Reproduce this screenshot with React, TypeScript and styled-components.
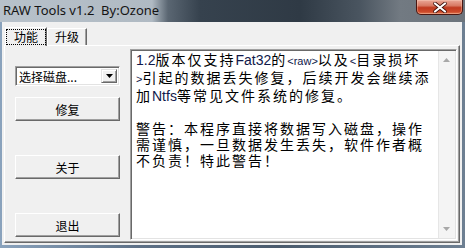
import React from 'react'
import styled, { createGlobalStyle } from 'styled-components'

const GlobalStyle = createGlobalStyle`
    html, body {
        margin: 0;
        padding: 0;
        width: 465px;
        height: 248px;
        overflow: hidden;
    }
`

const cjk = `"Noto Sans CJK SC", sans-serif`

const App: React.FC = () => {
    return (
        <Window>
            <GlobalStyle />
            <TitleBar>
                <Title>RAW Tools v1.2&nbsp;&nbsp;By:Ozone</Title>
                <CloseButton>
                    <svg width="14" height="11" viewBox="0 0 14 11">
                        <path d="M2 1.5 L12 9.5 M12 1.5 L2 9.5" stroke="#3a0d08" strokeWidth="3.6" strokeLinecap="round" />
                        <path d="M2 1.5 L12 9.5 M12 1.5 L2 9.5" stroke="#ffffff" strokeWidth="2.2" strokeLinecap="round" />
                    </svg>
                </CloseButton>
            </TitleBar>
            <Client>
                <TabStrip>
                    <Tab $active>
                        <Focus>功能</Focus>
                    </Tab>
                    <Tab>升级</Tab>
                </TabStrip>
                <Panel>
                    <LeftColumn>
                        <Combo>
                            <ComboText>选择磁盘...</ComboText>
                            <ComboArrow>
                                <svg width="7" height="4" viewBox="0 0 7 4">
                                    <path d="M0 0 H7 L3.5 4 Z" fill="#000" />
                                </svg>
                            </ComboArrow>
                        </Combo>
                        <ButtonStack>
                            <Button>修复</Button>
                            <Button>关于</Button>
                            <Button>退出</Button>
                        </ButtonStack>
                    </LeftColumn>
                    <TextBox>
                        <TextContent>
                            <Latin>1.2</Latin>版本仅支持<Latin>Fat32</Latin>的<Small>&lt;raw&gt;</Small>以及<Small>&lt;</Small>目录损坏<br />
                            <Small>&gt;</Small>引起的数据丢失修复，后续开发会继续添<br />
                            加<Latin>Ntfs</Latin>等常见文件系统的修复。<br />
                            <br />
                            警告：本程序直接将数据写入磁盘，操作<br />
                            需谨慎，一旦数据发生丢失，软件作者概<br />
                            不负责！特此警告！
                        </TextContent>
                        <ScrollBar>
                            <svg width="7" height="4" viewBox="0 0 7 4">
                                <path d="M3.5 0 L7 4 H0 Z" fill="#a8a8a8" />
                            </svg>
                            <svg width="7" height="4" viewBox="0 0 7 4">
                                <path d="M0 0 H7 L3.5 4 Z" fill="#a8a8a8" />
                            </svg>
                        </ScrollBar>
                    </TextBox>
                </Panel>
            </Client>
        </Window>
    )
}

const Window = styled.div`
    width: 465px;
    height: 248px;
    display: flex;
    flex-direction: column;
    background: linear-gradient(90deg, #8aa3bd 0, #5d7086 30%, #4a5b6d 60%, #6d7f92 100%);
    box-sizing: border-box;
`

const TitleBar = styled.div`
    height: 22px;
    display: flex;
    justify-content: space-between;
    align-items: flex-start;
    background: linear-gradient(90deg, #b7c1ca 0, #b0bac3 152px, #5a6672 168px, #36424e 200px, #2f3a45 300px, #4a5560 360px, #727a82 400px, #6c747c 465px);
`

const Title = styled.div`
    padding: 2px 0 0 3px;
    font-family: "Noto Sans", sans-serif;
    font-size: 13px;
    line-height: 17px;
    color: #141414;
    white-space: nowrap;
`

const CloseButton = styled.div`
    width: 47px;
    height: 15px;
    margin-right: 2px;
    box-sizing: border-box;
    display: flex;
    align-items: center;
    justify-content: center;
    border: 1px solid #4a1610;
    border-top: none;
    border-radius: 0 0 5px 5px;
    background: linear-gradient(180deg, #eaa898 0, #d87a64 40%, #c03a20 55%, #cc4a2a 85%, #e4805a 100%);
    box-shadow: inset 0 0 0 1px rgba(255, 220, 200, 0.35);
`

const Client = styled.div`
    flex: 1;
    margin: 0 3px 3px 2px;
    background: #f0f0f0;
    display: flex;
    flex-direction: column;
    padding-top: 5px;
    font-family: ${cjk};
    color: #000;
`

const TabStrip = styled.div`
    display: flex;
    align-items: flex-end;
    height: 18px;
    padding-left: 3px;
    position: relative;
    z-index: 1;
`

const Tab = styled.div<{ $active?: boolean }>`
    height: ${p => (p.$active ? '19px' : '17px')};
    margin-bottom: ${p => (p.$active ? '-1px' : '0')};
    box-sizing: border-box;
    padding: ${p => (p.$active ? '1px 0 0' : '0 7px')};
    background: #f0f0f0;
    border-top: 1px solid #ffffff;
    border-left: 1px solid #ffffff;
    border-right: 1px solid #696969;
    box-shadow: inset -1px 0 0 #a0a0a0;
    font-size: 12px;
    line-height: 16px;
    display: flex;
    align-items: flex-start;
`

const Focus = styled.span`
    border: 1px dotted #000;
    padding: 0 7px;
    line-height: 14px;
`

const Panel = styled.div`
    flex: 1;
    margin: 0 2px 2px 2px;
    display: flex;
    border-top: 1px solid #ffffff;
    border-left: 1px solid #ffffff;
    border-right: 1px solid #696969;
    border-bottom: 1px solid #696969;
    box-shadow: inset -1px -1px 0 #a0a0a0;
    padding: 3px 2px 2px 10px;
`

const LeftColumn = styled.div`
    width: 105px;
    margin-right: 10px;
    padding-top: 17px;
    display: flex;
    flex-direction: column;
`

const Combo = styled.div`
    height: 20px;
    box-sizing: border-box;
    display: flex;
    background: #fff;
    border-top: 1px solid #a0a0a0;
    border-left: 1px solid #a0a0a0;
    border-right: 1px solid #ffffff;
    border-bottom: 1px solid #ffffff;
    box-shadow: inset 1px 1px 0 #696969, inset -1px -1px 0 #e3e3e3;
    padding: 2px;
`

const ComboText = styled.div`
    flex: 1;
    font-size: 12px;
    line-height: 16px;
    padding-left: 1px;
    white-space: nowrap;
`

const ComboArrow = styled.div`
    width: 16px;
    box-sizing: border-box;
    background: #f0f0f0;
    border-top: 1px solid #e3e3e3;
    border-left: 1px solid #e3e3e3;
    border-right: 1px solid #696969;
    border-bottom: 1px solid #696969;
    box-shadow: inset 1px 1px 0 #fff, inset -1px -1px 0 #a0a0a0;
    display: flex;
    align-items: center;
    justify-content: center;
`

const ButtonStack = styled.div`
    margin-top: 11px;
    display: flex;
    flex-direction: column;
    gap: 34px;
`

const Button = styled.div`
    height: 24px;
    box-sizing: border-box;
    background: #f0f0f0;
    border-top: 1px solid #ffffff;
    border-left: 1px solid #ffffff;
    border-right: 1px solid #696969;
    border-bottom: 1px solid #696969;
    box-shadow: inset -1px -1px 0 #a0a0a0;
    display: flex;
    align-items: center;
    justify-content: center;
    font-size: 12px;
`

const TextBox = styled.div`
    flex: 1;
    min-width: 0;
    display: flex;
    background: #fff;
    border-top: 1px solid #a0a0a0;
    border-left: 1px solid #a0a0a0;
    border-right: 1px solid #ffffff;
    border-bottom: 1px solid #ffffff;
    box-shadow: inset 1px 1px 0 #696969, inset -1px -1px 0 #e3e3e3;
    padding: 1px;
`

const TextContent = styled.div`
    flex: 1;
    min-width: 0;
    padding: 0 0 0 4px;
    font-family: ${cjk};
    font-size: 14px;
    line-height: 16px;
    letter-spacing: 2px;
    white-space: nowrap;
`

const Latin = styled.span`
    font-family: "Liberation Sans", sans-serif;
    font-size: 14px;
    letter-spacing: 0;
    color: #10184a;
`

const Small = styled(Latin)`
    font-size: 11px;
`

const ScrollBar = styled.div`
    width: 17px;
    flex-shrink: 0;
    background: #f4f4f4;
    box-shadow: inset 1px 0 0 #e6e6e6;
    display: flex;
    flex-direction: column;
    justify-content: space-between;
    align-items: center;
    padding: 7px 0 7px;
`

export default App
